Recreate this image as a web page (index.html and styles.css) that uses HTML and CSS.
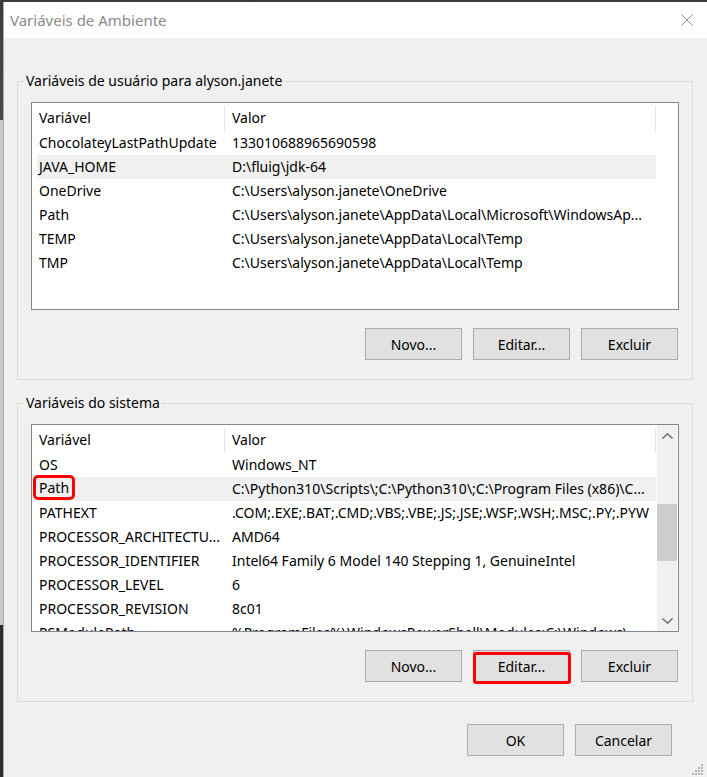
FILE: index.html
```html
<!DOCTYPE html>
<html lang="pt-BR">

<head>
    <meta charset="UTF-8">
    <meta name="viewport" content="width=device-width, initial-scale=1.0">
    <title>Variáveis de Ambiente</title>
    <link rel="stylesheet" href="styles.css">
</head>

<body>
    <div class="window">
        <div class="titlebar">
            <span class="title">Variáveis de Ambiente</span>
            <svg class="close" width="12" height="12" viewBox="0 0 12 12">
                <path d="M0.5 0.5 L11.5 11.5 M11.5 0.5 L0.5 11.5" stroke="#8c8c8c" stroke-width="1" fill="none" />
            </svg>
        </div>

        <div class="content">
            <!-- user variables -->
            <fieldset class="group">
                <legend>Variáveis de usuário para alyson.janete</legend>

                <div class="list">
                    <div class="list-body">
                        <div class="list-head">
                            <div class="head-cell name-col">Variável</div>
                            <div class="head-cell">Valor</div>
                        </div>
                        <div class="row"><span>ChocolateyLastPathUpdate</span><span>133010688965690598</span></div>
                        <div class="row selected"><span>JAVA_HOME</span><span>D:\fluig\jdk-64</span></div>
                        <div class="row"><span>OneDrive</span><span>C:\Users\alyson.janete\OneDrive</span></div>
                        <div class="row"><span>Path</span><span>C:\Users\alyson.janete\AppData\Local\Microsoft\WindowsAp...</span></div>
                        <div class="row"><span>TEMP</span><span>C:\Users\alyson.janete\AppData\Local\Temp</span></div>
                        <div class="row"><span>TMP</span><span>C:\Users\alyson.janete\AppData\Local\Temp</span></div>
                    </div>
                </div>

                <div class="actions">
                    <button class="btn">Novo...</button>
                    <button class="btn">Editar...</button>
                    <button class="btn">Excluir</button>
                </div>
            </fieldset>

            <!-- system variables -->
            <fieldset class="group second">
                <legend>Variáveis do sistema</legend>

                <div class="list">
                    <div class="list-body">
                        <div class="list-head">
                            <div class="head-cell name-col">Variável</div>
                            <div class="head-cell">Valor</div>
                        </div>
                        <div class="row"><span>OS</span><span>Windows_NT</span></div>
                        <div class="row selected"><span><span class="mark">Path</span></span><span>C:\Python310\Scripts\;C:\Python310\;C:\Program Files (x86)\C...</span></div>
                        <div class="row"><span>PATHEXT</span><span>.COM;.EXE;.BAT;.CMD;.VBS;.VBE;.JS;.JSE;.WSF;.WSH;.MSC;.PY;.PYW</span></div>
                        <div class="row"><span>PROCESSOR_ARCHITECTU...</span><span>AMD64</span></div>
                        <div class="row"><span>PROCESSOR_IDENTIFIER</span><span>Intel64 Family 6 Model 140 Stepping 1, GenuineIntel</span></div>
                        <div class="row"><span>PROCESSOR_LEVEL</span><span>6</span></div>
                        <div class="row"><span>PROCESSOR_REVISION</span><span>8c01</span></div>
                        <div class="row"><span>PSModulePath</span><span>%ProgramFiles%\WindowsPowerShell\Modules;C:\Windows\...</span></div>
                    </div>
                    <div class="scrollbar">
                        <div class="arrow">
                            <svg width="11" height="6" viewBox="0 0 11 6"><path d="M0.5 5.5 L5.5 0.8 L10.5 5.5" stroke="#606060" stroke-width="1.3" fill="none" /></svg>
                        </div>
                        <div class="track"><div class="thumb"></div></div>
                        <div class="arrow">
                            <svg width="11" height="6" viewBox="0 0 11 6"><path d="M0.5 0.5 L5.5 5.2 L10.5 0.5" stroke="#606060" stroke-width="1.3" fill="none" /></svg>
                        </div>
                    </div>
                </div>

                <div class="actions">
                    <button class="btn">Novo...</button>
                    <button class="btn marked">Editar...</button>
                    <button class="btn">Excluir</button>
                </div>
            </fieldset>

            <div class="footer">
                <button class="btn">OK</button>
                <button class="btn">Cancelar</button>
            </div>
        </div>

        <svg class="grip" width="12" height="12" viewBox="0 0 12 12">
            <rect x="9" y="0" width="2" height="2" fill="#b4b4b4" />
            <rect x="6" y="3" width="2" height="2" fill="#b4b4b4" />
            <rect x="9" y="3" width="2" height="2" fill="#b4b4b4" />
            <rect x="3" y="6" width="2" height="2" fill="#b4b4b4" />
            <rect x="6" y="6" width="2" height="2" fill="#b4b4b4" />
            <rect x="9" y="6" width="2" height="2" fill="#b4b4b4" />
            <rect x="0" y="9" width="2" height="2" fill="#b4b4b4" />
            <rect x="3" y="9" width="2" height="2" fill="#b4b4b4" />
            <rect x="6" y="9" width="2" height="2" fill="#b4b4b4" />
            <rect x="9" y="9" width="2" height="2" fill="#b4b4b4" />
        </svg>
    </div>
</body>

</html>
```

FILE: styles.css
```css
* {
    box-sizing: border-box;
    margin: 0;
    padding: 0;
    font-family: "Noto Sans", "Open Sans", sans-serif;
}

body {
    width: 707px;
    height: 777px;
    overflow: hidden;
    background: linear-gradient(to bottom, #3b3b3b 0, #4a4a4a 120px, #c9c9c9 120px, #c9c9c9 625px, #2e2e2e 625px);
}

.window {
    position: relative;
    margin: 2px 0 0 3px;
    width: 704px;
    height: 775px;
    background: #f0f0f0;
    border-left: 1px solid #a9a9a9;
}

.titlebar {
    height: 36px;
    background: #fff;
    display: flex;
    align-items: center;
    justify-content: space-between;
    padding: 0 14px 0 6px;
}

.title {
    font-size: 15px;
    color: #8a8a8a;
}

.content {
    padding: 0 14px 0 13px;
}

/* group boxes */
.group {
    margin-top: 33px;
    border: 1px solid #dcdcdc;
    padding: 11px 13px 19px 13px;
}

.group.second {
    margin-top: 13px;
}

.group legend {
    font-size: 14px;
    line-height: 20px;
    color: #000;
    margin-left: -7px;
    padding: 0 2px;
}

/* list views */
.list {
    height: 208px;
    background: #fff;
    border: 1px solid #828790;
    display: flex;
    overflow: hidden;
}

.list-body {
    width: 624px;
    flex-shrink: 0;
}

.list-head {
    display: grid;
    grid-template-columns: 193px 431px;
    height: 28px;
    padding-top: 3px;
}

.head-cell {
    font-size: 14px;
    line-height: 23px;
    padding-left: 7px;
    border-right: 1px solid #e5e5e5;
    color: #000;
}

.row {
    display: grid;
    grid-template-columns: 188px 431px;
    height: 24px;
    margin-left: 5px;
    font-size: 14px;
    line-height: 24px;
    color: #000;
    white-space: nowrap;
}

.row > span:first-child {
    padding-left: 2px;
}

.row > span:last-child {
    padding-left: 7px;
    overflow: hidden;
}

.row.selected {
    background: #f0f0f0;
}

/* red highlight drawn around the Path name */
.mark {
    display: inline-block;
    vertical-align: top;
    line-height: 19px;
    margin-top: 1px;
    padding: 0 3px;
    margin-left: -3px;
    outline: 3px solid #ff0000;
    border-radius: 2px;
}

.scrollbar {
    width: 20px;
    margin-left: 1px;
    background: #f0f0f0;
    display: flex;
    flex-direction: column;
}

.arrow {
    height: 21px;
    display: flex;
    align-items: center;
    justify-content: center;
}

.track {
    flex: 1;
}

.thumb {
    margin-top: 58px;
    height: 57px;
    background: #cdcdcd;
}

/* buttons */
.actions,
.footer {
    display: flex;
    justify-content: flex-end;
    gap: 11px;
}

.actions {
    margin-top: 18px;
    padding-right: 1px;
}

.footer {
    margin-top: 22px;
    padding-right: 21px;
}

.btn {
    width: 97px;
    height: 32px;
    background: #e1e1e1;
    border: 1px solid #adadad;
    font-size: 14px;
    color: #000;
    position: relative;
}

.btn.marked::after {
    content: "";
    position: absolute;
    top: 1px;
    left: -1px;
    right: -2px;
    bottom: -3px;
    border: 3px solid #ff0000;
    border-radius: 3px;
}

.grip {
    position: absolute;
    right: 3px;
    bottom: 1px;
}
```
